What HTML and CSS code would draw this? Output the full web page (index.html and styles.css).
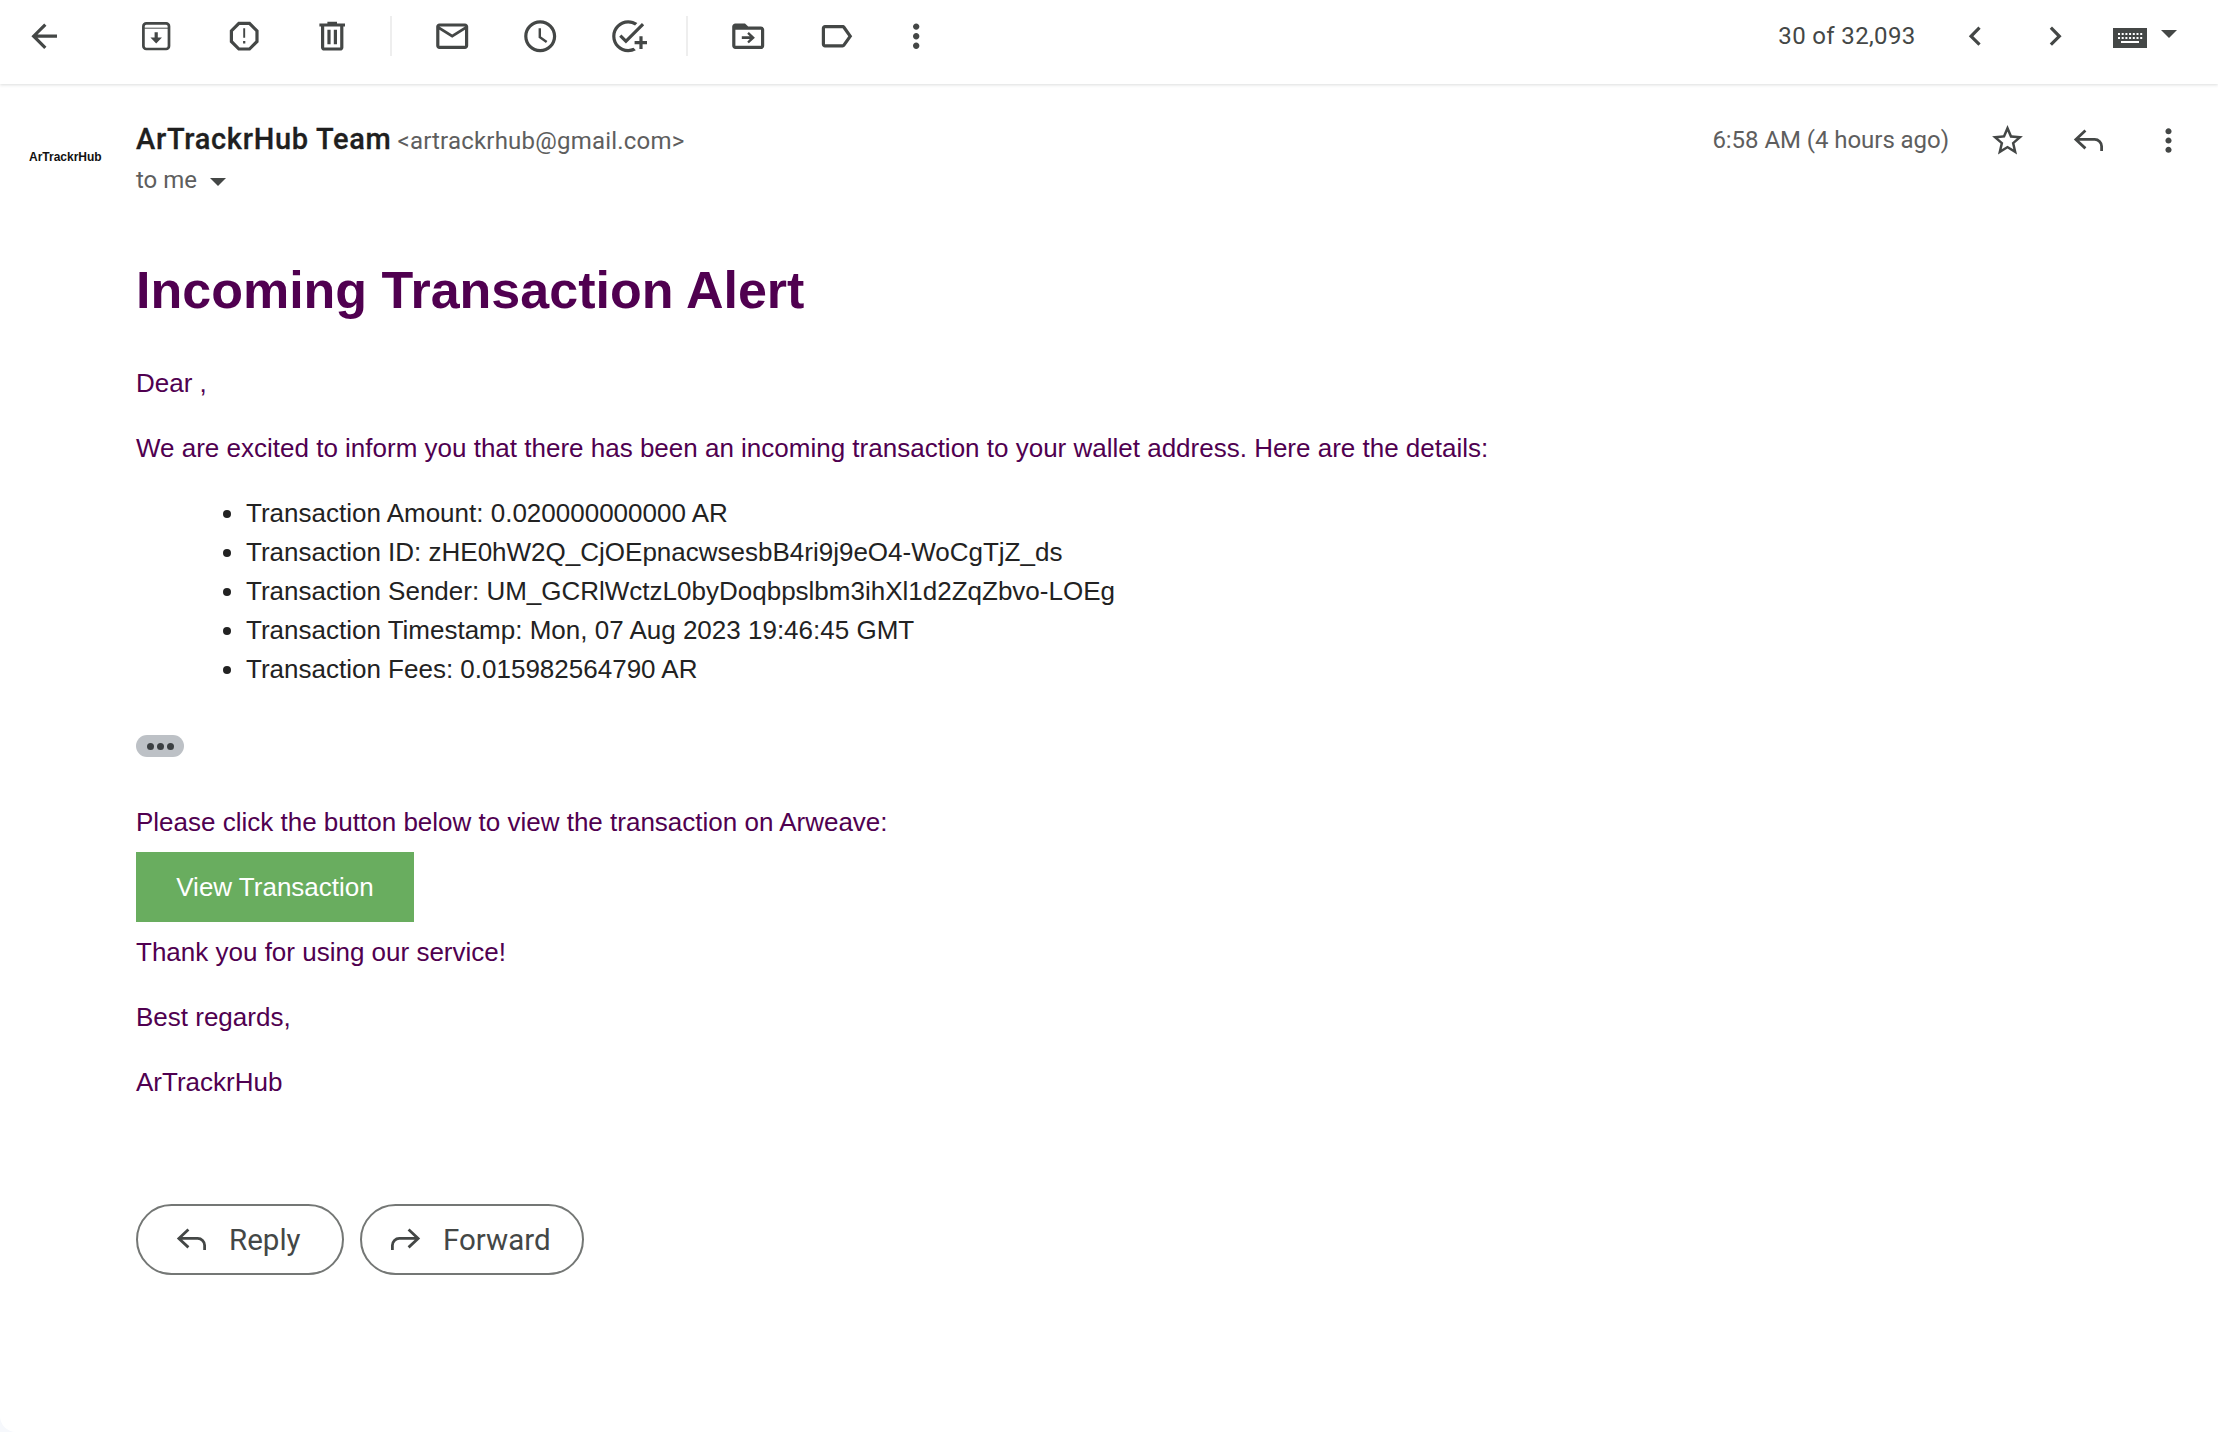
FILE: index.html
```html
<!DOCTYPE html>
<html lang="en">
<head>
<meta charset="utf-8">
<title>Incoming Transaction Alert</title>
<link rel="stylesheet" href="styles.css">
</head>
<body>
<main class="page">
  <header class="toolbar">
    <button class="tool tool-back"><svg class="ic" viewBox="0 0 24 24"><path d="M20 11H7.83l5.59-5.59L12 4l-8 8 8 8 1.41-1.41L7.83 13H20v-2z"/></svg></button>
    <button class="tool"><svg class="ic" viewBox="0 0 24 24"><rect class="line line-box" x="4" y="4" width="16" height="16" rx="1.8"/><path class="line line-thin" d="M4.5 7h15"/><path d="M11 9.6h2v3.2h2.6L12 16.6l-3.6-3.8H11z"/></svg></button>
    <button class="tool"><svg class="ic" viewBox="0 0 24 24"><path d="M15.73 3H8.27L3 8.27v7.46L8.27 21h7.46L21 15.73V8.27L15.73 3zM19 14.9L14.9 19H9.1L5 14.9V9.1L9.1 5h5.8L19 9.1v5.8z"/><path d="M11.4 7h1.2v6h-1.2zM11.3 15h1.4v1.6h-1.4z"/></svg></button>
    <button class="tool"><svg class="ic" viewBox="0 0 24 24"><path d="M15 4V3H9v1H4v2h1v13c0 1.1.9 2 2 2h10c1.1 0 2-.9 2-2V6h1V4h-5zm2 15H7V6h10v13z"/><path d="M9 8h2v9H9zm4 0h2v9h-2z"/></svg></button>
    <span class="sep"></span>
    <button class="tool"><svg class="ic" viewBox="0 0 24 24"><path d="M20 4H4c-1.1 0-2 .9-2 2v12c0 1.1.9 2 2 2h16c1.1 0 2-.9 2-2V6c0-1.1-.9-2-2-2zm0 14H4V8l8 5 8-5v10zm-8-7L4 6h16l-8 5z"/></svg></button>
    <button class="tool"><svg class="ic" viewBox="0 0 24 24"><path d="M11.99 2C6.47 2 2 6.48 2 12s4.47 10 9.99 10C17.52 22 22 17.52 22 12S17.52 2 11.99 2zM12 20c-4.42 0-8-3.58-8-8s3.58-8 8-8 8 3.58 8 8-3.58 8-8 8z"/><path d="M12.5 7H11v6l4.6 3.2.9-1.2-4-2.8z"/></svg></button>
    <button class="tool"><svg class="ic" viewBox="0 0 24 24"><path d="M22 5.18L10.59 16.6l-4.24-4.24 1.41-1.41 2.83 2.83 10-10L22 5.18zM12 20c-4.41 0-8-3.59-8-8s3.59-8 8-8c1.57 0 3.04.46 4.28 1.25l1.45-1.45C16.1 2.67 14.13 2 12 2 6.48 2 2 6.48 2 12s4.48 10 10 10c1.73 0 3.36-.44 4.78-1.22l-1.5-1.5c-1 .46-2.11.72-3.28.72zm7-5h-3v2h3v3h2v-3h3v-2h-3v-3h-2v3z"/></svg></button>
    <span class="sep"></span>
    <button class="tool"><svg class="ic" viewBox="0 0 24 24"><path d="M20 6h-8l-2-2H4c-1.1 0-2 .9-2 2v12c0 1.1.9 2 2 2h16c1.1 0 2-.9 2-2V8c0-1.1-.9-2-2-2zm0 12H4V8h16v10z"/><path d="M12.4 9.4l-1 1 1.6 1.7H8v1.6h5l-1.6 1.7 1 1L16.2 13z"/></svg></button>
    <button class="tool"><svg class="ic" viewBox="0 0 24 24"><path d="M17.63 5.84C17.27 5.33 16.67 5 16 5L5 5.01C3.9 5.01 3 5.9 3 7v10c0 1.1.9 1.99 2 1.99L16 19c.67 0 1.27-.33 1.63-.84L22 12l-4.37-6.16zM16 17H5V7h11l3.55 5L16 17z"/></svg></button>
    <button class="tool tool-narrow"><svg class="ic" viewBox="0 0 24 24"><path d="M12 8c1.1 0 2-.9 2-2s-.9-2-2-2-2 .9-2 2 .9 2 2 2zm0 2c-1.1 0-2 .9-2 2s.9 2 2 2 2-.9 2-2-.9-2-2-2zm0 6c-1.1 0-2 .9-2 2s.9 2 2 2 2-.9 2-2-.9-2-2-2z"/></svg></button>
    <div class="pager">
      <span class="count">30 of 32,093</span>
      <button class="tool tool-page"><svg class="ic" viewBox="0 0 24 24"><path d="M15.41 7.41L14 6l-6 6 6 6 1.41-1.41L10.83 12z"/></svg></button>
      <button class="tool tool-page"><svg class="ic" viewBox="0 0 24 24"><path d="M10 6L8.59 7.41 13.17 12l-4.58 4.59L10 18l6-6z"/></svg></button>
      <svg class="kbd" viewBox="0 0 34 20"><path fill-rule="evenodd" d="M0 0h34v20H0zM5 5v2h2V5zm3.7 0v2h2V5zm3.7 0v2h2V5zm3.7 0v2h2V5zm3.7 0v2h2V5zm3.7 0v2h2V5zm3.7 0v2h2V5zM5 9v2h2V9zm3.7 0v2h2V9zm3.7 0v2h2V9zm3.7 0v2h2V9zm3.7 0v2h2V9zm3.7 0v2h2V9zm3.7 0v2h2V9zM8 13v2h18v-2z"/></svg>
      <span class="caret caret-kbd"></span>
    </div>
  </header>

  <section class="message">
    <div class="avatar">ArTrackrHub</div>
    <div class="content">
      <div class="meta">
        <div class="from">
          <div class="from-line"><span class="name">ArTrackrHub Team</span> <span class="addr">&lt;artrackrhub@gmail.com&gt;</span></div>
          <div class="to">to me <span class="caret caret-to"></span></div>
        </div>
        <div class="actions">
          <span class="time">6:58 AM (4 hours ago)</span>
          <svg class="ic ic-star" viewBox="0 0 24 24"><path d="M22 9.24l-7.19-.62L12 2 9.19 8.63 2 9.24l5.46 4.73L5.82 21 12 17.27 18.18 21l-1.63-7.03L22 9.24zM12 15.4l-3.76 2.27 1-4.28-3.32-2.88 4.38-.38L12 6.1l1.71 4.04 4.38.38-3.32 2.88 1 4.28L12 15.4z"/></svg>
          <svg class="ic ic-reply" viewBox="0 0 24 24"><path class="line" d="M10 5.5L3.8 11.3l6.2 5.8M4.5 11.3H16a4.5 4.5 0 0 1 4.5 4.5v3"/></svg>
          <svg class="ic ic-more" viewBox="0 0 24 24"><path d="M12 8c1.1 0 2-.9 2-2s-.9-2-2-2-2 .9-2 2 .9 2 2 2zm0 2c-1.1 0-2 .9-2 2s.9 2 2 2 2-.9 2-2-.9-2-2-2zm0 6c-1.1 0-2 .9-2 2s.9 2 2 2 2-.9 2-2-.9-2-2-2z"/></svg>
        </div>
      </div>

      <article class="mail">
        <h1>Incoming Transaction Alert</h1>
        <p>Dear ,</p>
        <p>We are excited to inform you that there has been an incoming transaction to your wallet address. Here are the details:</p>
        <ul>
          <li>Transaction Amount: 0.020000000000 AR</li>
          <li>Transaction ID: zHE0hW2Q_CjOEpnacwsesbB4ri9j9eO4-WoCgTjZ_ds</li>
          <li>Transaction Sender: UM_GCRlWctzL0byDoqbpslbm3ihXl1d2ZqZbvo-LOEg</li>
          <li>Transaction Timestamp: Mon, 07 Aug 2023 19:46:45 GMT</li>
          <li>Transaction Fees: 0.015982564790 AR</li>
        </ul>
        <div class="trim"><i></i><i></i><i></i></div>
        <p class="click">Please click the button below to view the transaction on Arweave:</p>
        <a class="cta">View Transaction</a>
        <p class="thanks">Thank you for using our service!</p>
        <p>Best regards,</p>
        <p>ArTrackrHub</p>
      </article>

      <div class="replies">
        <button class="pill pill-reply"><svg class="ic" viewBox="0 0 24 24"><path class="line" d="M10 5.5L3.8 11.3l6.2 5.8M4.5 11.3H16a4.5 4.5 0 0 1 4.5 4.5v3"/></svg>Reply</button>
        <button class="pill pill-forward"><svg class="ic" viewBox="0 0 24 24"><path class="line" d="M14 5.5l6.2 5.8-6.2 5.8M19.5 11.3H8a4.5 4.5 0 0 0-4.5 4.5v3"/></svg>Forward</button>
      </div>
    </div>
  </section>
</main>
</body>
</html>
```
FILE: styles.css
```css
* { box-sizing: border-box; }
html, body { margin: 0; height: 100%; background: #f6f8fc; }
body { overflow: hidden; }
.page {
  height: 1432px;
  background: #fff;
  border-radius: 0 0 0 16px;
  overflow: hidden;
  font-family: Roboto, "Liberation Sans", sans-serif;
  color: #444746;
}
.ic { width: 37px; height: 37px; fill: #444746; display: block; flex: none; }
.line { fill: none; stroke: #444746; stroke-width: 1.8; }
.line-box { stroke-width: 1.7; }
.line-thin { stroke-width: .6; }
button { border: 0; background: none; padding: 0; font: inherit; color: inherit; }

.toolbar {
  height: 84px;
  padding-bottom: 12px;
  display: flex;
  align-items: center;
  background: #fff;
  box-shadow: 0 1px 3px rgba(60, 64, 67, .18);
  position: relative;
}
.toolbar .ic { width: 38.4px; height: 38.4px; }
.tool { width: 88px; height: 70px; display: flex; align-items: center; justify-content: center; }
.tool-back { margin-right: 24px; }
.tool-narrow { width: 72px; }
.tool-page { width: 80px; }
.sep { width: 2px; height: 40px; background: #eeeeee; margin: 0 16px 0 14px; }
.pager { margin-left: auto; display: flex; align-items: center; padding-right: 41px; }
.count { font-size: 24px; letter-spacing: .35px; margin-right: 20px; color: #444746; }
.kbd { width: 34px; height: 20px; fill: #444746; margin-left: 17.4px; margin-top: 3px; }
.caret { display: inline-block; width: 0; height: 0; border-left: 8px solid transparent; border-right: 8px solid transparent; border-top: 8px solid #444746; }
.caret-kbd { margin-left: 14px; margin-top: -4px; }
.caret-to { margin-left: 7px; vertical-align: 2px; }

.message { display: flex; padding: 30px 0 0 29px; }
.avatar { width: 79px; flex: none; margin-top: 36px; font: bold 12px/14px "Liberation Sans", sans-serif; color: #111; }
.content { flex: 1; padding-right: 31px; padding-left: 28px; }
.meta { display: flex; justify-content: space-between; align-items: flex-start; padding-top: 6px; }
.from-line { height: 38px; line-height: 38px; white-space: nowrap; }
.name { font-size: 29px; font-weight: 500; color: #1f1f1f; letter-spacing: .7px; -webkit-text-stroke: .3px #1f1f1f; }
.addr { font-size: 24px; color: #5e5e5e; letter-spacing: .2px; margin-left: 2px; }
.to { font-size: 24px; line-height: 44px; color: #5e5e5e; }
.actions { display: flex; align-items: center; height: 40px; }
.time { font-size: 24px; color: #5e5e5e; margin-right: 40px; letter-spacing: -.05px; }
.ic-star { margin-right: 44px; }
.ic-reply { margin-right: 43px; }

.mail { padding-top: 58.5px; font: 26px/39px "Liberation Sans", Arial, sans-serif; color: #500050; }
.mail h1 { font-size: 52px; line-height: 58px; margin: 0 0 45.5px; }
.mail p { margin: 0 0 26px; }
.mail ul { margin: 0; padding-left: 110px; color: #222; }
.trim { margin-top: 46px; width: 48px; height: 22px; border-radius: 11px; background: #bdc1c6; display: flex; align-items: center; justify-content: center; gap: 3px; }
.trim i { width: 7px; height: 7px; border-radius: 50%; background: #3c4043; }
.click { margin-top: 46px !important; margin-bottom: 10px !important; }
.cta { display: block; width: 278px; height: 70px; background: #69ad5f; color: #fff; text-align: center; line-height: 70px; }
.thanks { margin-top: 11px !important; }

.replies { display: flex; gap: 16px; margin-top: 102px; }
.pill { height: 71px; border: 2.5px solid #747775; border-radius: 36px; display: flex; align-items: center; font-size: 29.5px; color: #444746; }
.pill-reply { width: 208px; padding-left: 35px; gap: 19px; }
.pill-forward { width: 224px; padding-left: 25px; gap: 19px; }
```
